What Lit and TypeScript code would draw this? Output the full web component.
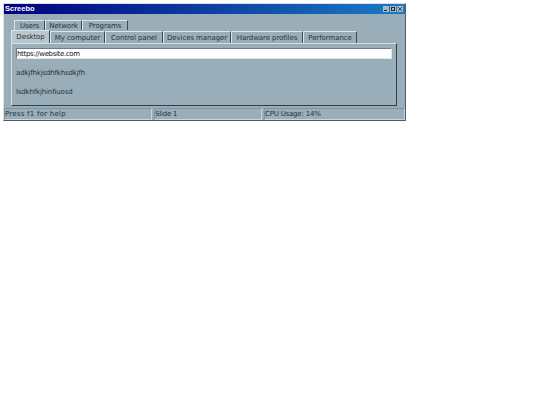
import { LitElement, html, css } from "lit";
import { customElement } from "lit/decorators.js";

@customElement("app-root")
export class AppRoot extends LitElement {
  static styles = css`
    :host { display: block; width: 540px; height: 405px; background: #fff; font-family: "DejaVu Sans", sans-serif; font-size: 7px; color: #26343c; overflow: hidden; }
    .win { margin: 3px 0 0 3px; width: 403px; height: 118px; box-sizing: border-box; background: #99aeb9; border: 1px solid; border-color: #d5dfe4 #4a5d69 #4a5d69 #d5dfe4; display: flex; flex-direction: column; }
    .title { height: 10px; background: linear-gradient(90deg, #00007f, #1a7cc4); color: #fff; font: bold 7.5px/10px "Liberation Sans", sans-serif; padding-left: 1px; display: flex; justify-content: space-between; align-items: center; flex: none; }
    .btns { display: flex; gap: 1px; margin-right: 2px; }
    .btn { width: 6px; height: 6px; display: block; }
    .body { flex: 1; display: flex; flex-direction: column; padding: 6px 8px 2px 7px; min-height: 0; }
    .row { display: flex; flex: none; }
    .back { padding-left: 3px; height: 10px; }
    .front { height: 13px; }
    .tab { box-sizing: border-box; border: 1px solid; border-color: #dbe4e8 #3a4b57 transparent #dbe4e8; border-bottom: 0; text-align: center; line-height: 10px; white-space: nowrap; letter-spacing: -.08px; }
    .front .tab { height: 12px; margin-top: 1px; line-height: 12px; }
    .front .tab.on { background: #b9c6cc; height: 13px; margin-top: 0; line-height: 13px; }
    .panel { flex: 1; box-sizing: border-box; border: 1px solid; border-color: #d5dfe4 #2e404c #2e404c #d5dfe4; padding: 4px 4px 0 4px; }
    .input { height: 11px; box-sizing: border-box; background: #fff; border: 1px solid; border-color: #6a7e8a #dfe7eb #dfe7eb #6a7e8a; line-height: 10px; color: #111; letter-spacing: -.35px; }
    .l1, .l2 { margin: 10px 0 0 0; line-height: 9px; letter-spacing: -.15px; }
    .status { height: 12px; flex: none; display: flex; gap: 2px; }
    .pane { box-sizing: border-box; border: 1px solid; border-color: #7f939d #c8d4da #c8d4da #7f939d; line-height: 11px; white-space: nowrap; letter-spacing: -.2px; }
    .pane.wide { letter-spacing: .24px; }
  `;
  render() {
    const back: [string, number][] = [["Users", 31], ["Network", 37], ["Programs", 46]];
    const front: [string, number, boolean][] = [["Desktop", 39, true], ["My computer", 55, false], ["Control panel", 58, false], ["Devices manager", 68, false], ["Hardware profiles", 72, false], ["Performance", 54, false]];
    return html`<div class="win">
      <div class="title"><span>Screebo</span><span class="btns">
        <svg class="btn" viewBox="0 0 6 6"><rect width="6" height="6" fill="#a8bac4"/><path d="M1 4.5h3" stroke="#1c2a33"/></svg>
        <svg class="btn" viewBox="0 0 6 6"><rect width="6" height="6" fill="#a8bac4"/><rect x="1.5" y="1.5" width="3" height="3" fill="none" stroke="#1c2a33"/></svg>
        <svg class="btn" viewBox="0 0 6 6"><rect width="6" height="6" fill="#a8bac4"/><path d="M1 1l4 4M5 1l-4 4" stroke="#1c2a33" stroke-width=".8"/></svg>
      </span></div>
      <div class="body">
        <div class="row back">${back.map(([t, w]) => html`<div class="tab" style="width:${w}px">${t}</div>`)}</div>
        <div class="row front">${front.map(([t, w, on]) => html`<div class="tab ${on ? "on" : ""}" style="width:${w}px">${t}</div>`)}</div>
        <div class="panel">
          <div class="input">https://website.com</div>
          <div class="l1">adkjfhkjsdhfkhsdkjfh</div>
          <div class="l2">lsdkhfkjhinfiuosd</div>
        </div>
      </div>
      <div class="status">
        <div class="pane wide" style="width:148px">Press f1 for help</div>
        <div class="pane" style="width:108px">Slide 1</div>
        <div class="pane" style="width:141px">CPU Usage: 14%</div>
      </div>
    </div>`;
  }
}
